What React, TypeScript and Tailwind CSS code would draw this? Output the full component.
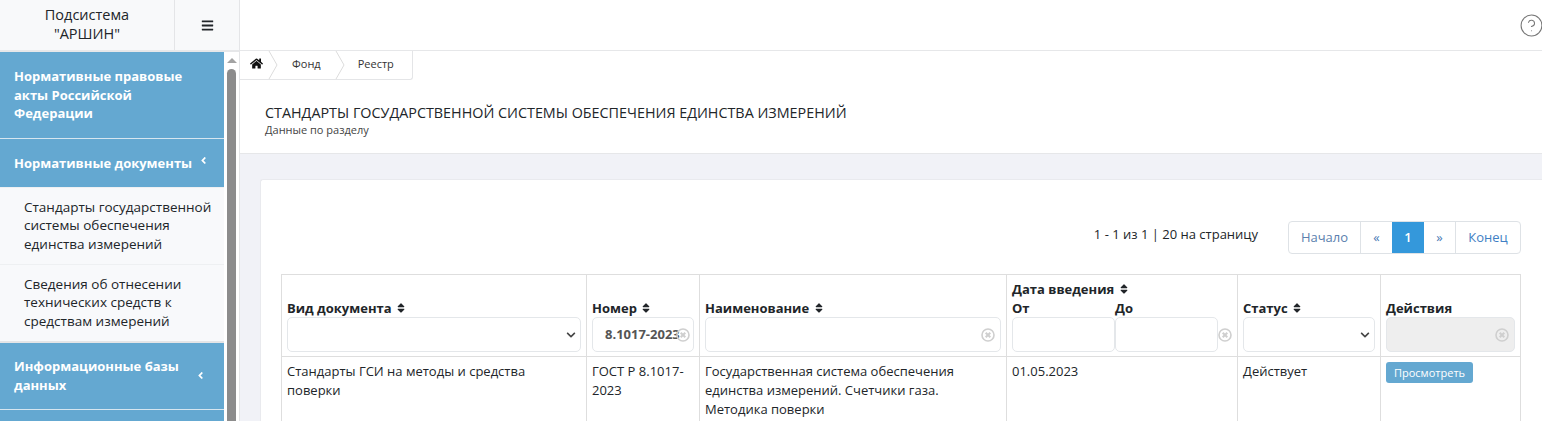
import { FaAngleLeft, FaBars, FaChevronDown, FaHome, FaSort } from "react-icons/fa";
import { CircleHelp } from "lucide-react";

const Sort = () => <FaSort size={12} className="inline-block text-[#212529] align-[-1px]" />;

const Clear = ({ className = "" }: { className?: string }) => (
  <svg width="14" height="14" viewBox="0 0 14 14" fill="none" stroke="#cfcfcf" strokeWidth="1.6" className={className}>
    <circle cx="7" cy="7" r="6" />
    <path d="M4.7 4.7 L9.3 9.3 M9.3 4.7 L4.7 9.3" strokeWidth="2" />
  </svg>
);

const SelectBox = () => (
  <div className="relative -mt-[1px] h-[35px] rounded-[5px] border border-[#e4e7ea] bg-white">
    <FaChevronDown size={10} className="absolute right-[4px] top-[12px] text-[#444]" />
  </div>
);

const Crumb = ({ label, className }: { label: string; className: string }) => (
  <div className="flex items-center">
    <svg width="10" height="28" viewBox="0 0 10 28" className="shrink-0" fill="none" stroke="#dcdcdc">
      <path d="M1 0 L9 14 L1 28" />
    </svg>
    <span className={`pb-[2px] text-[11px] text-[#333] ${className}`}>{label}</span>
  </div>
);

const App = () => {
  return (
    <div className="flex h-screen overflow-hidden bg-white font-['Open_Sans',sans-serif] text-[#212529]">
      {/* Sidebar */}
      <aside className="flex w-[240px] shrink-0 flex-col border-r border-[#e4e5e7] bg-white">
        <div className="flex h-[52px] shrink-0 border-b-2 border-[#e6e7e9] bg-[#f8f9fa]">
          <div className="flex w-[175px] items-center justify-center border-r border-[#e4e5e7] pb-[3px] text-center text-[14.5px] leading-[19px] text-[#212529]">
            Подсистема
            <br />
            "АРШИН"
          </div>
          <div className="flex flex-1 items-center justify-center">
            <FaBars size={13} className="text-[#212529]" />
          </div>
        </div>
        <div className="flex min-h-0 flex-1">
          <nav className="w-[224px] shrink-0 text-[13px] leading-[18.5px]">
            <div className="border-b border-[#d6e6f0] bg-[#64a8d1] pb-[15px] pl-[14px] pr-[20px] pt-[15px] font-bold text-white">
              Нормативные правовые акты Российской Федерации
            </div>
            <div className="flex h-[48px] items-center bg-[#64a8d1] pl-[14px] pt-[1px] font-bold text-white">
              Нормативные документы
              <FaAngleLeft size={11} className="ml-[6px] mt-[-5px]" />
            </div>
            <div className="bg-[#f8f9fb] text-[13.5px] text-[#212529]">
              <div className="h-[78px] border-b border-t border-[#eef0f2] pl-[24px] pr-[8px] pt-[10px]">
                Стандарты государственной системы обеспечения единства измерений
              </div>
              <div className="h-[78px] border-b-2 border-[#e4e5e7] pl-[24px] pr-[8px] pt-[10px]">
                Сведения об отнесении технических средств к средствам измерений
              </div>
            </div>
            <div className="flex h-[67px] items-center border-b border-[#d6e6f0] bg-[#64a8d1] pl-[14px] pr-[18px] font-bold text-white">
              <span className="w-[180px]">Информационные базы данных</span>
              <FaAngleLeft size={11} className="ml-auto" />
            </div>
            <div className="h-[60px] bg-[#64a8d1]" />
          </nav>
          <div className="flex flex-1 flex-col items-center bg-white pt-[6px]">
            <div className="h-0 w-0 border-x-[5px] border-b-[5px] border-x-transparent border-b-[#a3a3a3]" />
            <div className="mt-[6px] w-[9px] flex-1 rounded-t-[5px] bg-[#8c8c8c]" />
          </div>
        </div>
      </aside>

      {/* Main */}
      <main className="flex min-w-0 flex-1 flex-col">
        <header className="flex h-[51px] shrink-0 items-center justify-end overflow-hidden border-b border-[#e6e7e9]">
          <CircleHelp size={25} strokeWidth={1} className="mr-[-2px] text-[#777]" />
        </header>
        <div className="flex h-[29px] w-[173px] shrink-0 items-center rounded-br-[3px] border-b border-r border-[#e4e5e7]">
          <FaHome size={13} className="mb-[3px] ml-[10px] mr-[5px] shrink-0 text-[#111]" />
          <Crumb label="Фонд" className="px-[14px]" />
          <Crumb label="Реестр" className="pl-[13px]" />
        </div>
        <div className="h-[74px] shrink-0 border-b border-[#e6e7e9] pl-[25px] pt-[23px]">
          <div className="text-[14.35px] leading-[19px] text-[#212529]">
            СТАНДАРТЫ ГОСУДАРСТВЕННОЙ СИСТЕМЫ ОБЕСПЕЧЕНИЯ ЕДИНСТВА ИЗМЕРЕНИЙ
          </div>
          <div className="mt-[1px] text-[11px] leading-[14px] text-[#444]">Данные по разделу</div>
        </div>
        <div className="flex-1 bg-[#f1f2f7] pl-[20px] pt-[25px]">
          <div className="h-[300px] rounded-tl-[3px] border-l border-t border-[#e9eaee] bg-white pl-[20px] pr-[21px] pt-[41px] text-[13px] text-[#212529]">
            {/* Pagination */}
            <div className="flex h-[53px] items-start justify-end">
              <div className="mr-[30px] mt-[4px] leading-[18px]">1 - 1 из 1 | 20 на страницу</div>
              <div className="flex h-[33px] overflow-hidden rounded-[4px] border border-[#dee2e6] text-[#4a7ab5]">
                <span className="flex w-[72px] items-center justify-center border-r border-[#dee2e6] text-[#5b7fae]">Начало</span>
                <span className="flex w-[31px] items-center justify-center">«</span>
                <span className="flex w-[32px] items-center justify-center bg-[#3498db] font-semibold text-white">1</span>
                <span className="flex w-[32px] items-center justify-center border-r border-[#dee2e6]">»</span>
                <span className="flex w-[64px] items-center justify-center text-[#3f7fc4]">Конец</span>
              </div>
            </div>
            {/* Table */}
            <table className="w-[1239px] table-fixed border-collapse">
              <colgroup>
                <col className="w-[305px]" />
                <col className="w-[113px]" />
                <col className="w-[307px]" />
                <col className="w-[231px]" />
                <col className="w-[143px]" />
                <col className="w-[140px]" />
              </colgroup>
              <thead>
                <tr className="h-[82px] text-[13px] font-bold leading-[19px]">
                  <th className="border border-[#dedede] px-[5px] pb-[4px] pt-[3px] text-left align-bottom">
                    Вид документа <Sort />
                    <SelectBox />
                  </th>
                  <th className="border border-[#dedede] px-[5px] pb-[4px] pt-[3px] text-left align-bottom">
                    Номер <Sort />
                    <div className="relative -mt-[1px] h-[35px] overflow-hidden whitespace-nowrap rounded-[5px] border border-[#e4e7ea] pl-[12px] pt-[7px] text-[#555]">
                      8.1017-2023
                      <Clear className="absolute right-[3px] top-[10px]" />
                    </div>
                  </th>
                  <th className="border border-[#dedede] px-[5px] pb-[4px] pt-[3px] text-left align-bottom">
                    Наименование <Sort />
                    <div className="relative -mt-[1px] h-[35px] rounded-[5px] border border-[#e4e7ea]">
                      <Clear className="absolute right-[5px] top-[10px]" />
                    </div>
                  </th>
                  <th className="border border-[#dedede] px-[5px] pb-[4px] pt-[3px] text-left align-bottom">
                    Дата введения <Sort />
                    <div className="relative flex pr-[14px]">
                      <div className="w-[103px]">
                        От
                        <div className="-mt-[1px] h-[35px] rounded-[5px] border border-[#e4e7ea]" />
                      </div>
                      <div className="w-[103px]">
                        До
                        <div className="-mt-[1px] h-[35px] rounded-[5px] border border-[#e4e7ea]" />
                      </div>
                      <Clear className="absolute bottom-[10px] right-[0px]" />
                    </div>
                  </th>
                  <th className="border border-[#dedede] px-[5px] pb-[4px] pt-[3px] text-left align-bottom">
                    Статус <Sort />
                    <SelectBox />
                  </th>
                  <th className="border border-[#dedede] px-[5px] pb-[4px] pt-[3px] text-left align-bottom">
                    Действия
                    <div className="relative -mt-[1px] h-[35px] rounded-[5px] border border-[#e4e7ea] bg-[#eeeeee]">
                      <Clear className="absolute right-[5px] top-[10px]" />
                    </div>
                  </th>
                </tr>
              </thead>
              <tbody className="leading-[19px]">
                <tr className="align-top">
                  <td className="border border-[#dedede] px-[5px] py-[5px]">Стандарты ГСИ на методы и средства поверки</td>
                  <td className="border border-[#dedede] px-[5px] py-[5px]">ГОСТ Р 8.1017-2023</td>
                  <td className="border border-[#dedede] px-[5px] py-[5px]">
                    Государственная система обеспечения единства измерений. Счетчики газа. Методика поверки
                  </td>
                  <td className="border border-[#dedede] px-[5px] py-[5px]">01.05.2023</td>
                  <td className="border border-[#dedede] px-[5px] py-[5px]">Действует</td>
                  <td className="border border-[#dedede] px-[5px] py-[5px]">
                    <button className="block rounded-[3px] bg-[#64a8d1] px-[8px] py-[2px] text-[11px] leading-[17px] text-white">
                      Просмотреть
                    </button>
                  </td>
                </tr>
              </tbody>
            </table>
          </div>
        </div>
      </main>
    </div>
  );
};

export default App;
